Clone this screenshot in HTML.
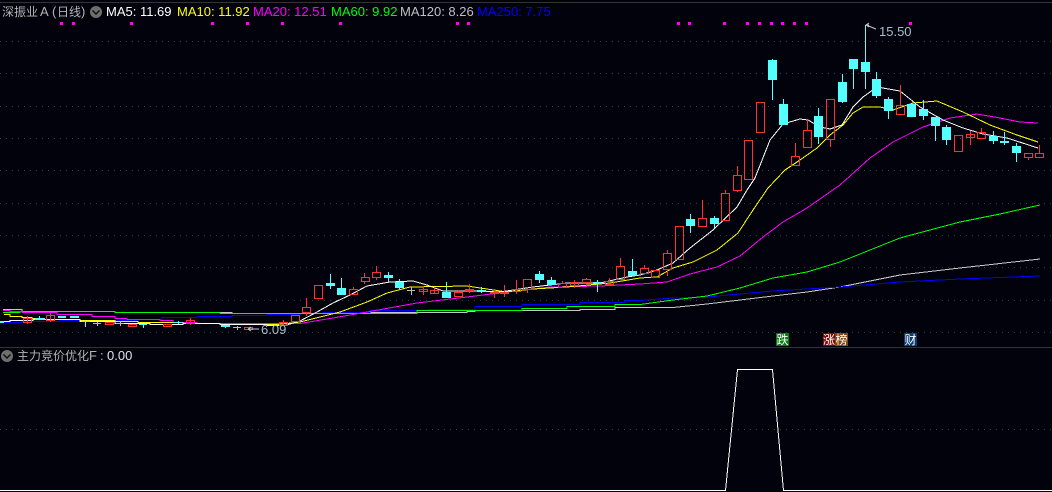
<!DOCTYPE html>
<html><head><meta charset="utf-8">
<style>
html,body{margin:0;padding:0;background:#02020c;}
body{width:1052px;height:492px;overflow:hidden;position:relative;}
svg{position:absolute;left:0;top:0;}
text{font-family:"Liberation Sans","Noto Sans CJK SC",sans-serif;}
</style></head>
<body>
<svg width="1052" height="492" viewBox="0 0 1052 492" xmlns="http://www.w3.org/2000/svg">
<rect width="1052" height="492" fill="#02020c"/>
<rect x="0" y="2" width="1052" height="1" fill="#333"/>
<rect x="0" y="347" width="1052" height="1" fill="#333"/>
<g stroke="#3a3a3a" stroke-width="1" stroke-dasharray="1 5" shape-rendering="crispEdges">
<path d="M0 41.5H1052M0 73.5H1052M0 106.5H1052M0 138.5H1052M0 170.5H1052M0 203.5H1052M0 235.5H1052M0 267.5H1052M0 300.5H1052M0 332.5H1052M0 429.5H1052"/>
</g>
<!-- dots -->
<g fill="#ff00ff">
<rect x="60" y="22" width="3" height="3"/><rect x="72" y="22" width="3" height="3"/><rect x="130" y="22" width="3" height="3"/><rect x="211" y="22" width="3" height="3"/><rect x="246" y="22" width="3" height="3"/><rect x="281" y="22" width="3" height="3"/><rect x="339" y="22" width="3" height="3"/><rect x="456" y="22" width="3" height="3"/><rect x="467" y="22" width="3" height="3"/><rect x="677" y="22" width="3" height="3"/><rect x="688" y="22" width="3" height="3"/><rect x="723" y="22" width="3" height="3"/><rect x="746" y="22" width="3" height="3"/><rect x="758" y="22" width="3" height="3"/><rect x="770" y="22" width="3" height="3"/><rect x="781" y="22" width="3" height="3"/><rect x="793" y="22" width="3" height="3"/><rect x="805" y="22" width="3" height="3"/><rect x="909" y="22" width="3" height="3"/>
</g>
<!-- MA lines -->
<g fill="none" stroke-width="1" stroke-linejoin="round" shape-rendering="crispEdges">
<path stroke="#c8c8c8" d="M3 309.500H22V311.500H115V312.500H232V313.500H300V313.500H370V312.500H417V312.500H467V311.500H475V310.500H533V310.500H580V309.500H615V307.500H673L707 304L740 300L773 296L807 292L840 287L900 275L960 268L1040 259"/>
<path stroke="#0000ff" d="M0 322.500H22V321.500H60V320.500H138V319.500H162V317.500H197V316.500H232V315.500H267V314.500H300V313.500H323V312.500H370V310.500H428V309.500H475V306.500H522V304.500H580V302.500H625V300.500H640L673 298L707 297L740 294L773 291L807 289L840 287L900 282L960 279L1040 276"/>
<path stroke="#00ff00" d="M3 312.500H20V311.500H115V312.500H220V313.500H347V313.500H417V310.500H522V308.500H567V306.500H615V304.500H640L673 300L707 296L740 288L773 278L807 272L840 262L870 250L900 238L930 230L960 222L1000 214L1040 205"/>
<path stroke="#ff00ff" d="M3 310.500H10V311.500H22V312.500H57V314.500H92V316.500H115V318.500H127V319.500H160V320.500H173V322.500H197V323.500H300L333 318L367 312L417 303L467 297L507 292L550 287L600 286L640 284L667 282L690 274L717 267L740 256L763 237L783 222L807 208L840 185L850 176L870 158L893 142L923 127L950 118L977 114L1000 118L1020 122L1038 123"/>
<path stroke="#ffff00" d="M4 314.500H10V316.500H22V317.500H32V318.500H44V319.500H80V320.500H115V321.500H138V322.500H183V323.500H220V324.500H278L300 322L320 317L340 312L367 302L387 293L410 287L467 286L487 289L507 292L533 289L567 287L610 283L640 278L657 277L673 268L693 262L717 250L738 233L753 210L768 188L785 170L800 160L817 148L830 135L843 125L853 113L863 107L880 107L893 110L913 103L937 101L963 112L990 125L1017 135L1038 142"/>
<path stroke="#ffffff" d="M0 321.500H10V320.500H33V319.500H80V321.500H115V323.500H150V324.500H183V323.500H220V324.500H267V325.500H285L300 321L317 312L333 303L350 295L367 286L390 282L413 281L427 285L443 291L473 291L500 292L533 287L567 283L600 283L627 277L640 275L657 270L673 263L690 248L713 230L737 207L747 190L755 178L770 140L783 124L800 119L808 120L820 127L830 129L842 125L853 107L863 97L877 87L900 91L920 107L943 120L963 128L983 134L1007 138L1038 148"/>
</g>
<!-- red candles -->
<g fill="none" stroke="#ff3232" stroke-width="1" shape-rendering="crispEdges">
<path d="M27.500 316V324M50.500 313V322M190.500 318V325M283.500 320V326M306.500 298V307M306.500 312V316M364.500 273V277M364.500 281V284M376.500 266V272M376.500 277V280M353.500 287V289M423.500 286V295M434.500 287V294M458.500 290V292M469.500 284V293M494.500 292V298M504.500 285V297M516.500 280V294M527.500 289V293M562.500 281V283M574.500 280V288M586.500 278V279M609.500 278V281M620.500 258V266M644.500 265V268M667.500 250V253M667.500 269V276M702.500 200V218M725.500 190V193M737.500 166V175M737.500 190V192M795.500 143V156M807.500 120V130M830.500 139V147M900.500 85V105M900.500 114V115M970.500 131V145M981.500 128V132M1028.500 157V160M1039.500 145V153"/>
<rect x="23.500" y="318.500" width="8" height="4"/><rect x="46.500" y="315.500" width="8" height="5"/><rect x="105.500" y="322.500" width="8" height="2"/><rect x="128.500" y="324.500" width="8" height="2"/><rect x="163.500" y="324.500" width="8" height="2"/><rect x="186.500" y="320.500" width="8" height="3"/><rect x="244.500" y="327.500" width="8" height="2"/><rect x="279.500" y="322.500" width="8" height="3"/><rect x="291.500" y="315.500" width="8" height="6"/>
<rect x="302.500" y="307.500" width="8" height="5"/><rect x="314.500" y="285.500" width="8" height="13"/><rect x="349.500" y="289.500" width="8" height="5"/><rect x="361.500" y="277.500" width="8" height="4"/><rect x="372.500" y="272.500" width="8" height="5"/><rect x="419.500" y="289.500" width="8" height="2"/><rect x="430.500" y="290.500" width="8" height="3"/><rect x="454.500" y="292.500" width="8" height="4"/><rect x="465.500" y="289.500" width="8" height="1"/><rect x="490.500" y="292.500" width="8" height="1"/><rect x="500.500" y="292.500" width="8" height="1"/><rect x="512.500" y="289.500" width="8" height="2"/><rect x="523.500" y="279.500" width="8" height="10"/><rect x="558.500" y="283.500" width="8" height="4"/><rect x="570.500" y="282.500" width="8" height="3"/><rect x="582.500" y="279.500" width="8" height="3"/><rect x="605.500" y="281.500" width="8" height="3"/><rect x="616.500" y="266.500" width="8" height="13"/><rect x="640.500" y="268.500" width="8" height="5"/><rect x="651.500" y="270.500" width="8" height="7"/><rect x="663.500" y="253.500" width="8" height="16"/><rect x="675.500" y="226.500" width="8" height="33"/><rect x="698.500" y="218.500" width="8" height="8"/><rect x="721.500" y="193.500" width="8" height="27"/><rect x="733.500" y="175.500" width="8" height="15"/><rect x="744.500" y="140.500" width="8" height="39"/><rect x="756.500" y="102.500" width="8" height="30"/><rect x="791.500" y="156.500" width="8" height="9"/><rect x="803.500" y="130.500" width="8" height="17"/><rect x="826.500" y="99.500" width="8" height="40"/><rect x="896.500" y="105.500" width="8" height="9"/><rect x="954.500" y="135.500" width="8" height="16"/><rect x="966.500" y="134.500" width="8" height="3"/><rect x="977.500" y="132.500" width="8" height="6"/><rect x="1024.500" y="153.500" width="8" height="4"/><rect x="1035.500" y="153.500" width="8" height="4"/>
</g>
<!-- gray crosses -->
<path stroke="#bdbdbd" fill="none" shape-rendering="crispEdges" d="M93 323.500H101M97.500 322V326M116 323.500H124M120.500 321V326M233 327.500H241M237.500 326V330M407 290.500H415M411.500 287V295"/>
<!-- cyan candles -->
<g stroke="#54ffff" fill="none" shape-rendering="crispEdges">
<path d="M39.500 316V320M85.500 321V327M143.500 324V328M178.500 321V324M225.500 325V328M330.500 274V289M341.500 278V295M388.500 272V282M399.500 279V290M446.500 282V298M481.500 287V293M539.500 271V283M551.500 277V285M597.500 280V292M632.500 259V276M690.500 214V233M714.500 216V228M772.500 59V100M783.500 99V125M818.500 108V144M842.500 74V103M853.500 59V89M865.500 25V89M876.500 72V98M888.500 97V119M911.500 104V117M923.500 100V120M935.500 117V141M946.500 125V145M993.500 131V144M1004.500 132V145M1016.500 143V162"/>
</g>
<g fill="#54ffff" shape-rendering="crispEdges">
<rect x="0" y="321" width="4" height="2"/><rect x="35" y="318" width="10" height="2"/><rect x="58" y="316" width="8" height="2"/><rect x="70" y="316" width="9" height="2"/><rect x="81" y="321" width="9" height="1"/><rect x="139" y="324" width="8" height="1"/><rect x="173" y="322" width="10" height="1"/><rect x="221" y="325" width="9" height="2"/>
<rect x="326" y="283" width="9" height="3"/><rect x="337" y="288" width="9" height="7"/><rect x="384" y="275" width="9" height="3"/><rect x="395" y="282" width="9" height="6"/><rect x="442" y="292" width="9" height="6"/><rect x="477" y="290" width="9" height="2"/><rect x="535" y="274" width="9" height="6"/><rect x="547" y="280" width="9" height="5"/><rect x="593" y="282" width="9" height="2"/><rect x="628" y="271" width="9" height="5"/><rect x="686" y="219" width="9" height="7"/><rect x="710" y="218" width="9" height="6"/><rect x="768" y="60" width="9" height="20"/><rect x="779" y="104" width="9" height="21"/><rect x="814" y="116" width="9" height="21"/><rect x="838" y="82" width="9" height="20"/><rect x="849" y="59" width="9" height="10"/><rect x="861" y="62" width="9" height="10"/><rect x="872" y="79" width="9" height="17"/><rect x="884" y="99" width="9" height="12"/><rect x="907" y="104" width="9" height="13"/><rect x="919" y="109" width="9" height="7"/><rect x="931" y="117" width="9" height="9"/><rect x="942" y="127" width="9" height="13"/><rect x="989" y="136" width="9" height="5"/><rect x="1000" y="141" width="9" height="2"/><rect x="1012" y="146" width="9" height="7"/>
</g>
<!-- header text -->
<g font-size="13">
<text y="16" fill="#b4b4b4"><tspan x="2" font-size="12">深振业</tspan><tspan x="40">A</tspan><tspan x="52">(</tspan><tspan x="57" font-size="12">日线</tspan><tspan x="81">)</tspan></text>
<circle cx="96" cy="12" r="6" fill="#6e6e6e"/>
<path d="M92.500 10.500L96 14L99.500 10.500" stroke="#111" stroke-width="1.500" fill="none"/>
<text x="106" y="16" fill="#ffffff">MA5: 11.69</text>
<text x="177" y="16" fill="#ffff00">MA10: 11.92</text>
<text x="253" y="16" fill="#ff00ff">MA20: 12.51</text>
<text x="331" y="16" fill="#00ff00">MA60: 9.92</text>
<text x="400" y="16" fill="#c0c0c0">MA120: 8.26</text>
<text x="477" y="16" fill="#0000ff">MA250: 7.75</text>
</g>
<!-- price markers -->
<path d="M865.500 25H869M866 25L876 29M866 25L869 23M866 25L869 27" stroke="#c8c8c8" fill="none"/>
<text x="879" y="36" font-size="13" fill="#a9bccb">15.50</text>
<path d="M248 329H259M248 329L251 327M248 329L251 331" stroke="#c8c8c8" fill="none"/>
<text x="261" y="334" font-size="13" fill="#a9bccb">6.09</text>
<!-- badges -->
<rect x="776" y="333" width="13" height="13" fill="#0a7a12"/>
<rect x="823" y="333" width="12" height="13" fill="#7d0a0a"/>
<rect x="835" y="333" width="13" height="13" fill="#83460f"/>
<rect x="904" y="333" width="13" height="13" fill="#0c3a6e"/>
<g font-size="12" fill="#ffffff" text-anchor="middle">
<text x="782.500" y="344">跌</text><text x="829" y="344">涨</text><text x="841.500" y="344">榜</text><text x="910.500" y="344">财</text>
</g>
<!-- sub pane -->
<circle cx="7" cy="356" r="6" fill="#6e6e6e"/>
<path d="M3.500 354.500L7 358L10.500 354.500" stroke="#111" stroke-width="1.500" fill="none"/>
<text y="360" fill="#b4b4b4"><tspan x="17" font-size="12">主力竞价优化</tspan><tspan x="89" font-size="13">F</tspan><tspan x="100" font-size="13">:</tspan><tspan x="107" font-size="13" fill="#d8e4f0">0.00</tspan></text>
<path d="M0 490.500H725.500L737.500 369.500H772.500L783.500 490.500H1052" fill="none" stroke="#ffffff" stroke-width="1" shape-rendering="crispEdges"/>
</svg>
</body></html>
